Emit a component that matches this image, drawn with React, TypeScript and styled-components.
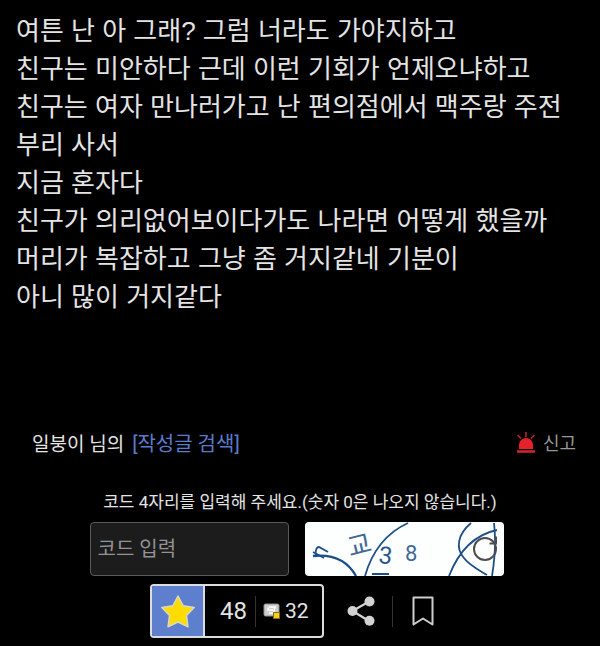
import React from "react";
import styled, { createGlobalStyle } from "styled-components";

const GlobalStyle = createGlobalStyle`
  * { box-sizing: border-box; }
  body {
    margin: 0;
    background: #000;
    color: #e4e4e4;
    font-family: Roboto, "Noto Sans CJK KR", sans-serif;
  }
  button, input { font-family: inherit; color: inherit; }
`;

const Page = styled.main`
  display: flex;
  flex-direction: column;
  padding-top: 12px;
`;

const Post = styled.article`
  padding: 0 16px;
  min-height: 410px;
  font-family: "Liberation Sans", "Noto Sans CJK KR", sans-serif;
  font-size: 26px;
  line-height: 38px;
  word-break: break-all;
`;

const Line = styled.p`
  margin: 0;
`;

const AuthorRow = styled.div`
  display: flex;
  align-items: center;
  justify-content: space-between;
  padding: 0 24px 0 32px;
  height: 40px;
  font-size: 19px;
`;

const Author = styled.div`
  display: flex;
  align-items: center;
  gap: 8px;
`;

const AuthorLink = styled.a`
  color: #5b7bcb;
  font-size: 20px;
  text-decoration: none;
`;

const ReportButton = styled.button`
  display: flex;
  align-items: center;
  gap: 7px;
  padding: 0;
  border: 0;
  background: none;
  color: #979797;
  font-size: 18px;
`;

const CodeForm = styled.form`
  display: flex;
  flex-direction: column;
  align-items: center;
  padding-top: 28px;
`;

const CodeLabel = styled.label`
  font-size: 17px;
  line-height: 24px;
`;

const CodeRow = styled.div`
  display: grid;
  grid-template-columns: 1fr 1fr;
  gap: 16px;
  width: 69%;
  height: 54px;
  margin: 8px 7px 0 0;
`;

const CodeInput = styled.input`
  min-width: 0;
  padding: 0 7px;
  border: 1px solid #5a5a5a;
  border-radius: 4px;
  background: #1c1c1c;
  font-size: 20px;
  &::placeholder { color: #939393; opacity: 1; }
`;

const Captcha = styled.div`
  position: relative;
  overflow: hidden;
  border-radius: 4px;
  background: #fdfefe;
  svg { display: block; }
`;

const RefreshButton = styled.button`
  position: absolute;
  top: 13px;
  right: 5px;
  padding: 0;
  border: 0;
  background: none;
`;

const Actions = styled.div`
  display: flex;
  align-items: center;
  justify-content: center;
  margin: 8px 6px 0 0;
  height: 54px;
`;

const VoteBox = styled.div`
  display: flex;
  align-items: center;
  height: 54px;
  width: 174px;
  border: 2px solid #dcdcdc;
  border-radius: 4px;
  overflow: hidden;
`;

const StarButton = styled.button`
  display: grid;
  place-items: center;
  width: 53px;
  height: 100%;
  padding: 0;
  border: 0;
  border-right: 2px solid #dcdcdc;
  background: #5d7fce;
`;

const VoteCount = styled.span`
  padding: 0 8px 0 15px;
  font-size: 24px;
`;

const MemberCount = styled.span`
  display: flex;
  align-items: center;
  gap: 4px;
  padding-left: 7px;
  font-size: 21px;
`;

const Divider = styled.span`
  width: 1px;
  height: 31px;
  background: #343434;
`;

const IconButton = styled.button`
  display: grid;
  place-items: center;
  padding: 0;
  border: 0;
  background: none;
  width: 68px;
  height: 54px;
`;

const ShareButton = styled(IconButton)`
  padding-left: 6px;
`;

const BookmarkButton = styled(IconButton)`
  width: 42px;
  margin-left: 9px;
`;

const lines = [
  "여튼 난 아 그래? 그럼 너라도 가야지하고",
  "친구는 미안하다 근데 이런 기회가 언제오냐하고",
  "친구는 여자 만나러가고 난 편의점에서 맥주랑 주전부리 사서",
  "지금 혼자다",
  "친구가 의리없어보이다가도 나라면 어떻게 했을까",
  "머리가 복잡하고 그냥 좀 거지같네 기분이",
  "아니 많이 거지같다",
];

const SirenIcon = () => (
  <svg width="20" height="23" viewBox="0 0 20 23" aria-hidden="true">
    <path d="M3 18v-4.500a7 6.500 0 0 1 14 0V18z" fill="#e3222b" />
    <path d="M1 20.500h18" stroke="#d3252d" strokeWidth="2.500" />
    <path d="M10 1v5M1.500 4l3.500 3.500M18.500 4L15 7.500" stroke="#c9272e" strokeWidth="1.500" fill="none" />
  </svg>
);

const CaptchaImage = () => (
  <svg width="100%" height="54" viewBox="0 0 199 54" role="img" aria-label="코드">
    <g fill="none" stroke="#1d4f87" strokeWidth="1.800">
      <path d="M8 34C27 32 42 38 51 54" strokeWidth="2.300" />
      <path d="M8 30l11 6M11 35C10 30 11 25 14 25L23 30" />
      <path d="M60 54C66 33 79 12 103 1" />
      <path d="M67 52h17" strokeWidth="2" />
      <path d="M166 1C153 12 150 26 159 36C164 43 172 47 182 53" />
      <path d="M144 54C153 31 168 13 192 8" />
      <path d="M189 1C191 18 190 36 187 54" />
    </g>
    <g fill="#3f6897" fontFamily="Roboto, 'Noto Sans CJK KR', sans-serif" fontWeight="400">
      <text x="45" y="35" fontSize="26" transform="rotate(-14 45 35)">교</text>
      <text x="73" y="41" fontSize="24" transform="rotate(6 73 41)" fill="#28578d">3</text>
      <text x="100" y="39" fontSize="22">8</text>
    </g>
  </svg>
);

const RefreshIcon = () => (
  <svg width="26" height="28" viewBox="0 0 26 28" aria-hidden="true">
    <circle cx="12" cy="14" r="11" fill="none" stroke="#4d4d50" strokeWidth="2" />
    <path d="M23 1.500v7h-6.500" fill="none" stroke="#4d4d50" strokeWidth="2" />
  </svg>
);

const StarIcon = () => (
  <svg width="36" height="35" viewBox="0 0 36 35" aria-hidden="true">
    <path
      d="M18 2l5.200 9.800 11 1.800-7.700 8 1.500 11.200L18 28 8 32.800l1.500-11.200-7.700-8 11-1.800z"
      fill="#ffdc00" stroke="#d9d9bd" strokeWidth="1.500" strokeLinejoin="round"
    />
  </svg>
);

const MemberIcon = () => (
  <svg width="18" height="17" viewBox="0 0 18 17" aria-hidden="true">
    <rect x="1" y="1" width="15" height="12" rx="1.500" fill="#cfcfcf" stroke="#8d8d8d" />
    <path d="M6 4h6l-1.500 6H6M5.500 4.500L5 7h5" fill="none" stroke="#fff" strokeWidth="1.600" />
    <rect x="10.500" y="9.500" width="6" height="6" fill="#f5d21c" stroke="#806f22" />
  </svg>
);

const ShareIcon = () => (
  <svg width="28" height="30" viewBox="0 0 28 30" aria-hidden="true">
    <path d="M22 5.500L5.500 15 22 25" fill="none" stroke="#d2d2d2" strokeWidth="2.200" />
    <g fill="#d2d2d2">
      <circle cx="22.500" cy="5.500" r="5" />
      <circle cx="5.500" cy="15" r="5" />
      <circle cx="22.500" cy="24.800" r="5" />
    </g>
  </svg>
);

const BookmarkIcon = () => (
  <svg width="22" height="30" viewBox="0 0 22 30" aria-hidden="true">
    <path d="M1.500 1.500h19v27L11 22.500l-9.500 6z" fill="none" stroke="#cecece" strokeWidth="2" strokeLinejoin="round" />
  </svg>
);

export default function App() {
  return (
    <>
      <GlobalStyle />
      <Page>
        <Post>
          {lines.map((line) => (
            <Line key={line}>{line}</Line>
          ))}
        </Post>
        <AuthorRow>
          <Author>
            <span>일붕이 님의</span>
            <AuthorLink href="#posts">[작성글 검색]</AuthorLink>
          </Author>
          <ReportButton type="button">
            <SirenIcon />
            신고
          </ReportButton>
        </AuthorRow>
        <CodeForm onSubmit={(event) => event.preventDefault()}>
          <CodeLabel htmlFor="code">코드 4자리를 입력해 주세요.(숫자 0은 나오지 않습니다.)</CodeLabel>
          <CodeRow>
            <CodeInput id="code" placeholder="코드 입력" autoComplete="off" />
            <Captcha>
              <CaptchaImage />
              <RefreshButton type="button" aria-label="새로고침">
                <RefreshIcon />
              </RefreshButton>
            </Captcha>
          </CodeRow>
        </CodeForm>
        <Actions>
          <VoteBox>
            <StarButton type="button" aria-label="추천">
              <StarIcon />
            </StarButton>
            <VoteCount>48</VoteCount>
            <Divider />
            <MemberCount>
              <MemberIcon />
              32
            </MemberCount>
          </VoteBox>
          <ShareButton type="button" aria-label="공유">
            <ShareIcon />
          </ShareButton>
          <Divider />
          <BookmarkButton type="button" aria-label="스크랩">
            <BookmarkIcon />
          </BookmarkButton>
        </Actions>
      </Page>
    </>
  );
}
